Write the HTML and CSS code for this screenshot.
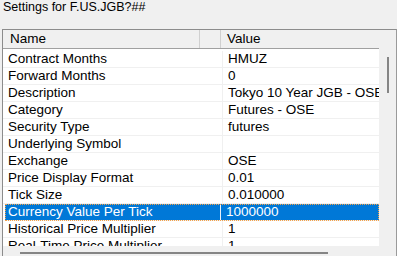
FILE: index.html
```html
<!DOCTYPE html>
<html lang="en">
<head>
    <meta charset="UTF-8">
    <title>Settings</title>
    <link rel="stylesheet" href="styles.css">
</head>
<body>
    <div class="title">Settings for F.US.JGB?##</div>
    <div class="listbox">
        <div class="pane">
            <div class="header">
                <div class="hcell name-head">Name</div>
                <div class="hcell spacer-head"></div>
                <div class="hcell value-head">Value</div>
            </div>
            <div class="rows">
                <div class="row"><div class="cell name">Contract Months</div><div class="cell value">HMUZ</div></div>
                <div class="row"><div class="cell name">Forward Months</div><div class="cell value">0</div></div>
                <div class="row"><div class="cell name">Description</div><div class="cell value">Tokyo 10 Year JGB - OSE</div></div>
                <div class="row"><div class="cell name">Category</div><div class="cell value">Futures - OSE</div></div>
                <div class="row"><div class="cell name">Security Type</div><div class="cell value">futures</div></div>
                <div class="row"><div class="cell name">Underlying Symbol</div><div class="cell value"></div></div>
                <div class="row"><div class="cell name">Exchange</div><div class="cell value">OSE</div></div>
                <div class="row"><div class="cell name">Price Display Format</div><div class="cell value">0.01</div></div>
                <div class="row"><div class="cell name">Tick Size</div><div class="cell value">0.010000</div></div>
                <div class="row selected"><div class="cell name">Currency Value Per Tick</div><div class="cell value">1000000</div></div>
                <div class="row"><div class="cell name">Historical Price Multiplier</div><div class="cell value">1</div></div>
                <div class="row"><div class="cell name">Real-Time Price Multiplier</div><div class="cell value">1</div></div>
            </div>
            <div class="hscroll"><div class="hthumb"></div></div>
        </div>
        <div class="vscroll"><div class="vthumb"></div></div>
    </div>
</body>
</html>
```

FILE: styles.css
```css
/* fenetre de reglages */
body {
    margin: 0;
    background-color: #f0f0f0;
    font-family: "Liberation Sans", Arial, sans-serif;
    color: #000;
    overflow: hidden;
}

.title {
    height: 29px;
    padding-left: 3px;
    font-size: 12.5px;
    line-height: 15px;
}

.listbox {
    display: flex;
    margin-left: 2px;
    height: 226px;
    border-top: 1px solid #8c8c8c;
    border-left: 1px solid #8c8c8c;
    border-right: 1px solid #9a9a9a;
}

.pane {
    flex: 1;
    display: flex;
    flex-direction: column;
    min-width: 0;
}

/* entete des colonnes */
.header {
    display: flex;
    flex-shrink: 0;
    height: 18px;
    border-bottom: 1px solid #a0a0a0;
    font-size: 13.5px;
    line-height: 18px;
}

.hcell {
    border-right: 1px solid #d0d0d0;
}

.name-head {
    width: 189px;
    padding-left: 7px;
}

.spacer-head {
    width: 20px;
}

.value-head {
    flex: 1;
    padding-left: 6px;
    border-right: none;
}

/* lignes */
.rows {
    flex-shrink: 0;
    height: 195px;
    padding-top: 2px;
    overflow: hidden;
    background-color: white;
    font-size: 13.5px;
}

.row {
    display: flex;
    height: 16px;
    line-height: 16px;
    border-bottom: 1px solid #f0f0f0;
    white-space: nowrap;
}

.cell {
    overflow: hidden;
}

.name {
    width: 214px;
    padding-left: 5px;
    border-right: 1px solid #f0f0f0;
}

.value {
    flex: 1;
    padding-left: 5px;
}

.selected {
    margin-left: 2px;
    background-color: #0078d7;
    color: white;
    outline: 1px dotted #f3a24a;
    outline-offset: -1px;
}

.selected .name {
    width: 212px;
    padding-left: 3px;
    border-right-color: #e8f0f8;
}

/* barres de defilement */
.hscroll {
    flex: 1;
    background-color: #f0f0f0;
}

.hthumb {
    margin-top: 6px;
    margin-left: 17px;
    width: 308px;
    height: 2px;
    background-color: #858585;
}

.vscroll {
    width: 17px;
    background-color: #f0f0f0;
}

.vthumb {
    margin-top: 27px;
    margin-left: 8px;
    width: 2px;
    height: 36px;
    background-color: #858585;
}
```
